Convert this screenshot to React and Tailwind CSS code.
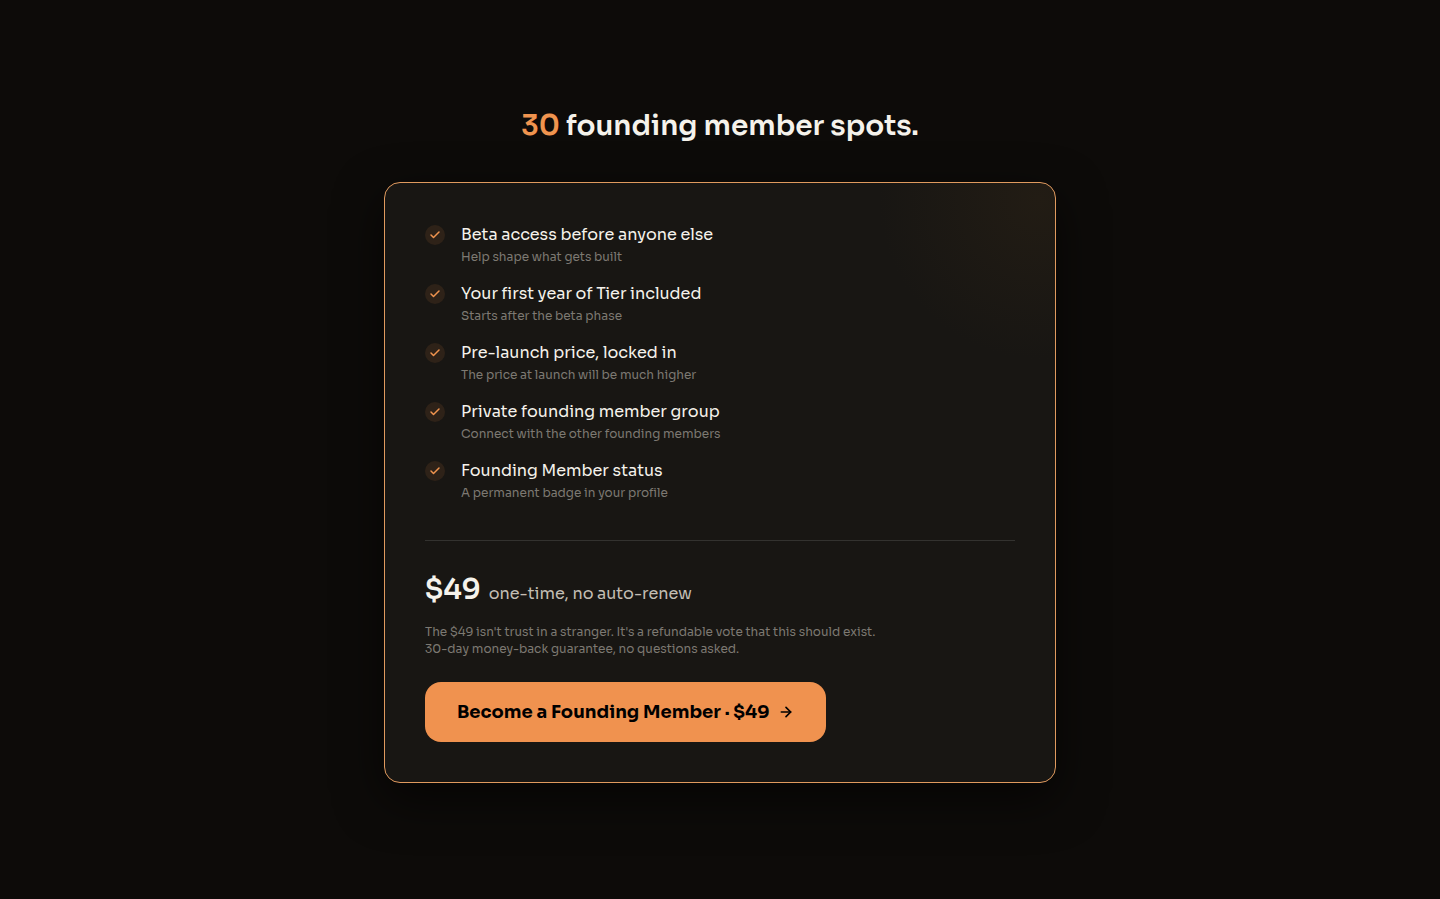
import { ArrowRight, Check } from "lucide-react";

const benefits = [
  { title: "Beta access before anyone else", note: "Help shape what gets built" },
  { title: "Your first year of Tier included", note: "Starts after the beta phase" },
  { title: "Pre-launch price, locked in", note: "The price at launch will be much higher" },
  { title: "Private founding member group", note: "Connect with the other founding members" },
  { title: "Founding Member status", note: "A permanent badge in your profile" },
];

function Benefit({ title, note }) {
  return (
    <li className="flex items-start gap-4">
      <span className="mt-0.5 flex size-5 shrink-0 items-center justify-center rounded-full bg-[#2e2218] text-[#f0944f]">
        <Check size={12} strokeWidth={3} aria-hidden="true" />
      </span>
      <div>
        <p className="text-base leading-6 text-[#f5f2eb]">{title}</p>
        <p className="text-xs leading-5 text-[#7d7972]">{note}</p>
      </div>
    </li>
  );
}

export default function App() {
  return (
    <main className="min-h-screen bg-[#0d0b09] px-6 pt-26 pb-24 font-['Sora','Inter',sans-serif] antialiased">
      <section className="mx-auto max-w-2xl">
        <h1 className="mb-[34px] text-center text-[28px] leading-11 font-semibold text-[#f5f2eb]">
          <span className="text-[#f0944f]">30</span> founding member spots.
        </h1>

        <div className="rounded-2xl border border-[#e09a5e] bg-[#181613] bg-[radial-gradient(circle_160px_at_calc(100%_-_16px)_16px,#221c14,#181613)] p-10 shadow-[0_16px_48px_#00000099]">
          <ul className="flex flex-col gap-[15px]">
            {benefits.map((benefit) => (
              <Benefit key={benefit.title} {...benefit} />
            ))}
          </ul>

          <div className="mt-[37px] border-t border-[#33322f] pt-[33px]">
            <p className="flex items-baseline gap-2 leading-8">
              <span className="text-[28px] font-semibold text-[#f5f2eb]">$49</span>
              <span className="text-base leading-8 text-[#c3beb3]">one-time, no auto-renew</span>
            </p>
            <p className="mt-[13px] text-xs leading-[17px] text-[#7d7972]">
              The $49 isn't trust in a stranger. It's a refundable vote that this should exist.
              <br />
              30-day money-back guarantee, no questions asked.
            </p>
            <button
              type="button"
              className="mt-[25px] flex h-15 cursor-pointer items-center gap-2 rounded-2xl bg-[#f0924f] px-8 text-lg font-bold text-black"
            >
              Become a Founding Member · $49
              <ArrowRight size={16} strokeWidth={2.5} aria-hidden="true" />
            </button>
          </div>
        </div>
      </section>
    </main>
  );
}
